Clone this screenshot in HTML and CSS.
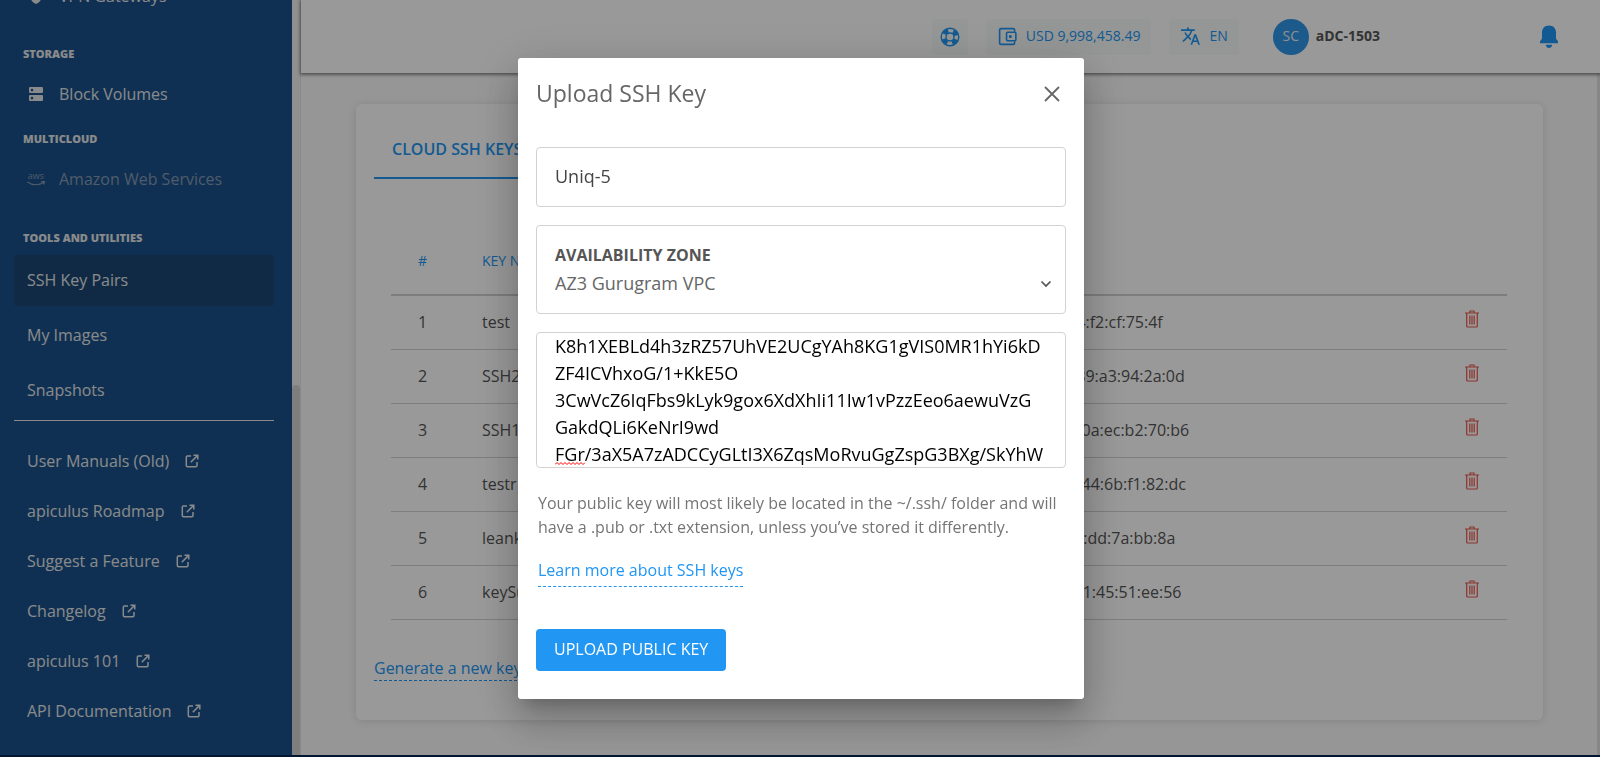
FILE: index.html
```html
<!DOCTYPE html>
<html lang="en">
<head>
<meta charset="utf-8">
<title>SSH Key Pairs</title>
<link rel="stylesheet" href="styles.css">
</head>
<body>
<svg class="sprite" aria-hidden="true">
  <symbol id="external" viewBox="0 0 14 14"><path d="M6 2H2.500A1.200 1.200 0 0 0 1.300 3.200v8.300a1.200 1.200 0 0 0 1.200 1.200h8.300a1.200 1.200 0 0 0 1.200-1.200V8M8.500 1.200H12.800V5.500M12.600 1.400L5.800 8.200" fill="none" stroke="currentColor" stroke-width="1.500"/></symbol>
  <symbol id="trash" viewBox="0 0 14 18"><path d="M0 3h14M5 2.800V1h4v1.800M1.700 3.400V16q0 1 1 1h8.600q1 0 1-1V3.400" fill="none" stroke="currentColor" stroke-width="1.200"/><path d="M4.800 5.500v9M7 5.500v9M9.200 5.500v9" stroke="currentColor" stroke-width="1.200"/></symbol>
</svg>
<div class="app">
  <nav class="sidebar" aria-label="Main">
    <a class="nav-item" href="#vpn">
      <svg class="nav-icon" viewBox="0 0 18 18"><path d="M9 1l6 2.500v5c0 4-2.600 7.200-6 8.500-3.400-1.300-6-4.500-6-8.500v-5z" fill="currentColor"/><path d="M6 8.500l2.300 2.300L12.200 7" fill="none" stroke="#1a5189" stroke-width="1.600"/></svg>
      VPN Gateways</a>
    <h2 class="nav-heading after-vpn">Storage</h2>
    <a class="nav-item" href="#volumes">
      <svg class="nav-icon" viewBox="0 0 18 18"><path fill="currentColor" fill-rule="evenodd" d="M3 2h12a1 1 0 0 1 1 1v4a1 1 0 0 1-1 1H3a1 1 0 0 1-1-1V3a1 1 0 0 1 1-1zm2 1.800a1.300 1.300 0 1 0 0 2.600 1.300 1.300 0 0 0 0-2.600zM3 10h12a1 1 0 0 1 1 1v4a1 1 0 0 1-1 1H3a1 1 0 0 1-1-1v-4a1 1 0 0 1 1-1zm2 1.800a1.300 1.300 0 1 0 0 2.600 1.300 1.300 0 0 0 0-2.600z"/></svg>
      Block Volumes</a>
    <h2 class="nav-heading after-volumes">Multicloud</h2>
    <a class="nav-item muted" href="#aws">
      <svg class="nav-icon" viewBox="0 0 18 18"><text class="aws-word" x="9" y="9" text-anchor="middle">aws</text><path d="M.500 12c5 3.600 11.500 3.600 16 .5M14.300 11.700l3.200-.1-.8 2.800" fill="none" stroke="currentColor" stroke-width="1.200"/></svg>
      Amazon Web Services</a>
    <h2 class="nav-heading after-aws">Tools and Utilities</h2>
    <div class="tools">
      <a class="tool active" href="#ssh">SSH Key Pairs</a>
      <a class="tool" href="#images">My Images</a>
      <a class="tool" href="#snapshots">Snapshots</a>
    </div>
    <div class="links">
      <a class="link" href="#manuals">User Manuals (Old) <svg class="ext"><use href="#external"/></svg></a>
      <a class="link" href="#roadmap">apiculus Roadmap <svg class="ext"><use href="#external"/></svg></a>
      <a class="link" href="#suggest">Suggest a Feature <svg class="ext"><use href="#external"/></svg></a>
      <a class="link" href="#changelog">Changelog <svg class="ext"><use href="#external"/></svg></a>
      <a class="link" href="#101">apiculus 101 <svg class="ext"><use href="#external"/></svg></a>
      <a class="link" href="#api">API Documentation <svg class="ext"><use href="#external"/></svg></a>
    </div>
  </nav>
  <div class="track"><div class="thumb"></div></div>
  <div class="page">
    <header class="topbar">
      <button class="chip round" type="button" aria-label="Support">
        <svg width="20" height="20" viewBox="0 0 20 20" fill="none" stroke="currentColor"><circle cx="10" cy="10" r="8.800" stroke-width="1.400"/><circle cx="10" cy="10" r="4" stroke-width="1.400"/><circle cx="10" cy="10" r="6.400" stroke-width="4.200" stroke-dasharray="5 5.053" stroke-dashoffset="-2.500"/></svg>
      </button>
      <button class="chip" type="button">
        <svg width="19" height="19" viewBox="0 0 20 20" fill="none" stroke="currentColor" stroke-width="1.700"><path d="M17.500 5V3.200a1.500 1.500 0 0 0-1.500-1.500H3.200a1.500 1.500 0 0 0-1.500 1.500v13.600a1.500 1.500 0 0 0 1.500 1.500H16a1.500 1.500 0 0 0 1.500-1.500V15"/><rect x="9" y="5.500" width="9.800" height="9" rx="1"/><circle cx="13" cy="10" r=".8" fill="currentColor"/></svg>
        <span class="caption">USD 9,998,458.49</span></button>
      <button class="chip" type="button">
        <svg width="19" height="19" viewBox="1 1.500 22 22"><path fill="currentColor" d="M12.870 15.070l-2.540-2.510.030-.030A17.520 17.520 0 0 0 14.070 6H17V4h-7V2H8v2H1v1.990h11.170C11.500 7.920 10.440 9.750 9 11.350 8.070 10.320 7.300 9.190 6.690 8h-2c.730 1.630 1.730 3.170 2.980 4.560l-5.090 5.020L4 19l5-5 3.110 3.110.760-2.040zM18.500 10h-2L12 22h2l1.120-3h4.750L21 22h2l-4.500-12zm-2.620 7l1.620-4.330L19.120 17h-3.240z"/></svg>
        <span class="caption">EN</span></button>
      <button class="account" type="button"><span class="avatar">SC</span><span class="caption">aDC-1503</span></button>
      <button class="bell" type="button" aria-label="Notifications">
        <svg width="20" height="24" viewBox="0 0 20 24" fill="currentColor"><path d="M10 .500c4.200 0 7 2.800 7 7v6.200l2 2.500v2H1v-2l2-2.500V7.500c0-4.200 2.800-7 7-7zM6.800 19.800h6.400c0 2-1.400 3.200-3.200 3.200s-3.200-1.200-3.200-3.200z"/></svg>
      </button>
    </header>
    <main class="content">
      <section class="card">
        <div class="tabs"><button class="tab" type="button">CLOUD SSH KEYS</button></div>
        <table class="keys">
          <thead><tr><th class="num">#</th><th class="name">KEY NAME</th><th class="print">FINGERPRINT</th><th class="act"></th></tr></thead>
          <tbody>
            <tr><td class="num">1</td><td>test</td><td>8f:21:0c:47:f3:96:50:c2:18:7f:03:64:f2:cf:75:4f</td><td class="act"><button type="button" aria-label="Delete test"><svg><use href="#trash"/></svg></button></td></tr>
            <tr><td class="num">2</td><td>SSH2</td><td>31:7f:05:82:c4:60:19:27:58:43:90:89:a3:94:2a:0d</td><td class="act"><button type="button" aria-label="Delete SSH2"><svg><use href="#trash"/></svg></button></td></tr>
            <tr><td class="num">3</td><td>SSH1</td><td>52:18:64:07:39:25:81:40:76:93:12:0a:ec:b2:70:b6</td><td class="act"><button type="button" aria-label="Delete SSH1"><svg><use href="#trash"/></svg></button></td></tr>
            <tr><td class="num">4</td><td>testr</td><td>60:93:27:51:08:34:72:19:85:46:30:44:6b:f1:82:dc</td><td class="act"><button type="button" aria-label="Delete testr"><svg><use href="#trash"/></svg></button></td></tr>
            <tr><td class="num">5</td><td>leank</td><td>f4:20:1f:83:56:c7:09:f2:48:31:6f:25:dd:7a:bb:8a</td><td class="act"><button type="button" aria-label="Delete leank"><svg><use href="#trash"/></svg></button></td></tr>
            <tr><td class="num">6</td><td>keySu</td><td>17:f0:24:9e:53:86:02:f7:41:a5:38:61:45:51:ee:56</td><td class="act"><button type="button" aria-label="Delete keySu"><svg><use href="#trash"/></svg></button></td></tr>
          </tbody>
        </table>
        <a class="dashed" href="#generate">Generate a new key</a>
      </section>
    </main>
  </div>
</div>
<div class="overlay">
  <form class="modal" role="dialog" aria-labelledby="title">
    <div class="modal-head">
      <h1 id="title">Upload SSH Key</h1>
      <button class="close" type="button" aria-label="Close"><svg width="16" height="16" viewBox="0 0 16 16"><path d="M1 1l14 14M15 1L1 15" stroke="currentColor" stroke-width="1.800"/></svg></button>
    </div>
    <input class="field key-name" type="text" aria-label="Key name" value="Uniq-5">
    <div class="field zone">
      <label for="zone">AVAILABILITY ZONE</label>
      <select id="zone"><option>AZ3 Gurugram VPC</option></select>
      <svg class="chevron" width="12" height="8" viewBox="0 0 12 8"><path d="M1.500 1.500L6 6l4.500-4.500" fill="none" stroke="currentColor" stroke-width="1.700"/></svg>
    </div>
    <div class="key-wrap">
      <textarea class="field key" aria-label="Public key" spellcheck="false">K8h1XEBLd4h3zRZ57UhVE2UCgYAh8KG1gVIS0MR1hYi6kD
ZF4ICVhxoG/1+KkE5O
3CwVcZ6IqFbs9kLyk9gox6XdXhIi11Iw1vPzzEeo6aewuVzG
GakdQLi6KeNrI9wd
FGr/3aX5A7zADCCyGLtI3X6ZqsMoRvuGgZspG3BXg/SkYhW</textarea>
      <svg class="squiggle" width="30" height="3" viewBox="0 0 30 3"><path d="M0 2.500L2 .500l2 2 2-2 2 2 2-2 2 2 2-2 2 2 2-2 2 2 2-2 2 2 2-2 2 2 2-2" fill="none" stroke="#f00"/></svg>
    </div>
    <p class="help">Your public key will most likely be located in the ~/.ssh/ folder and will have a .pub or .txt extension, unless you’ve stored it differently.</p>
    <a class="dashed learn" href="#learn">Learn more about SSH keys</a>
    <button class="submit" type="submit">UPLOAD PUBLIC KEY</button>
  </form>
</div>
</body>
</html>
```
FILE: styles.css
```css
* { box-sizing: border-box; }

body {
  margin: 0;
  height: 100vh;
  overflow: hidden;
  background: #002550;
  color: #555;
  font: 16px/24px "Open Sans", "Noto Sans", sans-serif;
}

button, input, select, textarea { font: inherit; color: inherit; }
button { border: 0; padding: 0; background: none; }
a { text-decoration: none; }
.sprite { display: none; }

.app { display: flex; height: calc(100vh - 2px); }

/* Sidebar, scrolled to its end */
.sidebar {
  flex: 0 0 292px;
  display: flex;
  flex-direction: column;
  justify-content: flex-end;
  overflow: hidden;
  padding: 0 18px 19px 14px;
  background: #1a5189;
  color: #e4e6e8;
  font-weight: 500;
}
.sidebar a { color: inherit; }
.nav-item {
  display: flex;
  align-items: center;
  gap: 14px;
  height: 40px;
  padding-left: 13px;
  flex-shrink: 0;
}
.nav-icon { width: 18px; height: 18px; overflow: visible; }
.aws-word { font-size: 9px; fill: currentColor; }
.sidebar .muted { color: #8499b2; }
.nav-heading {
  flex-shrink: 0;
  margin: 0;
  padding-left: 9px;
  font-size: 11px;
  line-height: 20px;
  font-weight: 800;
  text-transform: uppercase;
}
.after-vpn { margin: 28px 0 10px; }
.after-volumes { margin: 15px 0 10px; }
.after-aws { margin: 29px 0 7px; }
.tools {
  display: flex;
  flex-direction: column;
  gap: 4px;
  flex-shrink: 0;
  padding-bottom: 4px;
  border-bottom: 1px solid #e4e6e8;
  margin-bottom: 15px;
}
.tool { height: 51px; padding-left: 13px; line-height: 50px; border-radius: 4px; }
.active { background: #1b4773; }
.links { flex-shrink: 0; }
.link { display: flex; align-items: center; gap: 16px; height: 50px; padding-left: 13px; }
.ext { width: 14px; height: 14px; }

.track { flex: 0 0 9px; display: flex; flex-direction: column; justify-content: flex-end; background: #efefef; border-right: 1px solid #e4e4e4; }
.thumb { height: 49%; background: #d3d3d3; border-radius: 4px 4px 0 0; }

/* Page */
.page { flex: 1; min-width: 0; display: flex; flex-direction: column; background: #fafafa; }
.topbar {
  position: relative;
  flex-shrink: 0;
  display: flex;
  align-items: center;
  justify-content: flex-end;
  gap: 18px;
  height: 73px;
  padding-right: 41px;
  background: #fff;
  box-shadow: 0 1px 3px 1px rgba(0, 0, 0, .45);
  font-size: 14px;
}
.chip {
  display: flex;
  align-items: center;
  gap: 9px;
  height: 36px;
  padding: 0 11px 0 12px;
  border-radius: 4px;
  background: #f8fbfb;
  color: #2196f3;
}
.round { padding: 0 8px; }
.account { display: flex; align-items: center; gap: 7px; margin-left: 16px; font-weight: 700; }
.avatar { width: 36px; height: 36px; border-radius: 50%; background: #2f96ea; color: #eee; font-weight: 500; line-height: 34px; text-align: center; }
.caption { line-height: 20px; padding-bottom: 2px; }
.bell { height: 24px; margin-left: 141px; color: #2196f3; }

.content { flex: 1; min-height: 0; padding: 31px 54px 0 55px; border-right: 3px solid #e2e2e2; }
.card {
  padding: 24px 18px 39px;
  border-radius: 6px;
  background: #fff;
  box-shadow: 0 1px 8px rgba(0, 0, 0, .12);
}
.tab {
  padding: 9px 18px 16px;
  border-bottom: 2px solid #2196f3;
  color: #2196f3;
  font-weight: 600;
}
.tabs { display: flex; margin-bottom: 50px; }
.keys { width: calc(100% - 35px); margin: 0 17px 36px; border-collapse: collapse; table-layout: fixed; }
.keys th { height: 66px; padding: 0 0 2px; border-bottom: 2px solid #d0d0d0; color: #2196f3; font-size: 14px; font-weight: 400; text-align: left; }
.keys td { height: 54px; padding: 0; border-bottom: 1px solid #d2d2d2; white-space: nowrap; }
.keys .num { width: 91px; padding-right: 28px; text-align: center; }
.name { width: 352px; }
.keys .act { width: 70px; text-align: center; }
.keys td.act button { height: 18px; color: #e8584c; display: block; margin: 0 auto 6px; }
.keys td.act svg { display: block; width: 14px; height: 18px; }
.dashed { display: inline-block; border-bottom: 1px dashed #2196f3; color: #2196f3; }

/* Dialog */
.overlay {
  position: fixed;
  inset: 0;
  display: flex;
  align-items: center;
  justify-content: center;
  padding-left: 2px;
  background: rgba(0, 0, 0, .4);
}
.modal {
  display: flex;
  flex-direction: column;
  align-items: flex-start;
  width: 100%;
  max-width: 566px;
  padding: 18px 18px 28px;
  border-radius: 3px;
  background: #fff;
  box-shadow: 0 11px 15px -7px rgba(0, 0, 0, .2), 0 24px 38px 3px rgba(0, 0, 0, .14), 0 9px 46px 8px rgba(0, 0, 0, .12);
}
.modal-head { display: flex; align-items: center; justify-content: space-between; width: 100%; padding-right: 6px; margin-bottom: 35px; }
.modal-head h1 { margin: 0; padding-bottom: 2px; color: #666; font-size: 23px; line-height: 34px; font-weight: 400; }
.close { height: 16px; line-height: 0; color: #666; }
.field {
  display: block;
  width: 100%;
  border: 1px solid #d2d2d2;
  border-radius: 4px;
  background: #fff;
  font-size: 18px;
}
.key-name { height: 60px; padding: 0 18px 2px; margin-bottom: 18px; color: #444; }
.zone { position: relative; padding: 17px 18px 16px; margin-bottom: 18px; }
.zone label { display: block; font-size: 16px; line-height: 25px; font-weight: 700; }
.zone select { appearance: none; display: block; width: 100%; height: 29px; border: 0; padding: 0; background: none; color: #666; }
.chevron { position: absolute; right: 13px; bottom: 25px; }
.key-wrap { position: relative; width: 100%; margin-bottom: 23px; }
.key { height: 136px; padding: 0 0 0 18px; overflow: hidden; resize: none; color: #000; line-height: 27px; white-space: pre; }
.squiggle { position: absolute; left: 19px; bottom: 3px; }
.help { margin: 0 0 19px; padding-left: 2px; color: #757575; }
.learn { margin: 0 0 42px 2px; padding-bottom: 4px; }
.submit { padding: 8px 18px 10px; border-radius: 4px; background: #2196f3; color: #fff; font-weight: 500; }
```
